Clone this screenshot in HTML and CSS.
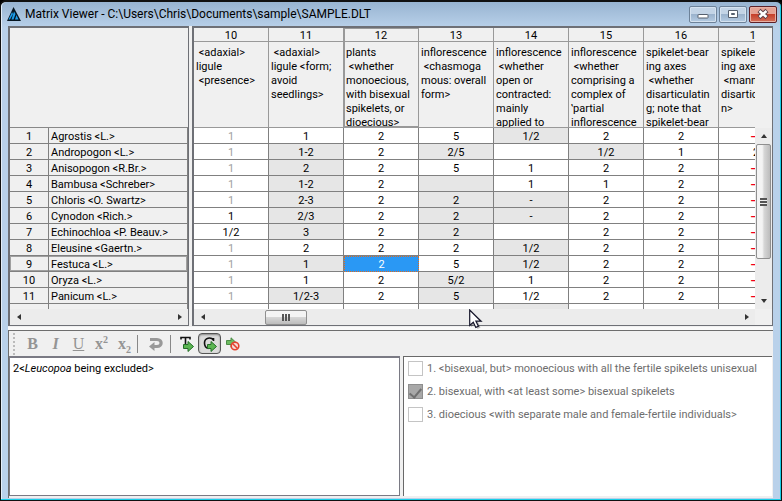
FILE: index.html
```html
<!DOCTYPE html>
<html lang="en">
<head>
<meta charset="utf-8">
<title>Matrix Viewer</title>
<link rel="stylesheet" href="styles.css">
</head>
<body>
<div class="window">
  <header class="titlebar">
    <svg class="logo" width="14" height="14" viewBox="0 0 14 14" aria-hidden="true">
      <path d="M6.500 0L14 14H0z" fill="#061520"/>
      <path d="M5 5L1.500 12.500H3L6 7zM7 4.500L4.500 12.500H6.500L8.500 7zM9.500 8L8 12.500h3.500z" fill="#1d9ce8"/>
    </svg>
    <h1>Matrix Viewer - C:\Users\Chris\Documents\sample\SAMPLE.DLT</h1>
    <div class="caption">
      <button aria-label="Minimize"><svg width="12" height="12" viewBox="0 0 12 12"><rect x="1" y="6.500" width="10" height="3.500" rx=".5" fill="#fff" stroke="#56606e"/></svg></button>
      <button aria-label="Maximize"><svg width="12" height="12" viewBox="0 0 12 12"><path d="M1.500 2.500h9v7h-9z" fill="#fff" stroke="#56606e"/><path d="M4.500 5.500h3v1h-3z" fill="#9ab" stroke="#56606e"/></svg></button>
      <button class="close" aria-label="Close"><svg width="12" height="12" viewBox="0 0 12 12"><path d="M2 2.500L10 9.500M10 2.500L2 9.500" stroke="#5a4048" stroke-width="4.500"/><path d="M2.500 3L9.500 9M9.500 3L2.500 9" stroke="#fff" stroke-width="2.500"/></svg></button>
    </div>
  </header>

  <main class="client">
    <section class="matrix">
      <div class="pane taxa">
        <div class="corner"></div>
        <div class="viewport">
          <table>
            <colgroup><col class="c-num"><col></colgroup>
            <tbody>
              <tr><th>1</th><td>Agrostis &lt;L.&gt;</td></tr>
              <tr><th>2</th><td>Andropogon &lt;L.&gt;</td></tr>
              <tr><th>3</th><td>Anisopogon &lt;R.Br.&gt;</td></tr>
              <tr><th>4</th><td>Bambusa &lt;Schreber&gt;</td></tr>
              <tr><th>5</th><td>Chloris &lt;O. Swartz&gt;</td></tr>
              <tr><th>6</th><td>Cynodon &lt;Rich.&gt;</td></tr>
              <tr><th>7</th><td>Echinochloa &lt;P. Beauv.&gt;</td></tr>
              <tr><th>8</th><td>Eleusine &lt;Gaertn.&gt;</td></tr>
              <tr class="current"><th>9</th><td>Festuca &lt;L.&gt;</td></tr>
              <tr><th>10</th><td>Oryza &lt;L.&gt;</td></tr>
              <tr><th>11</th><td>Panicum &lt;L.&gt;</td></tr>
              <tr><th></th><td></td></tr>
            </tbody>
          </table>
        </div>
        <div class="hbar"><button class="arrow left" aria-label="Scroll left"></button><button class="arrow right" aria-label="Scroll right"></button></div>
      </div>

      <div class="pane data">
        <div class="viewport">
          <table>
            <colgroup><col><col><col><col><col><col><col><col></colgroup>
            <thead>
              <tr class="nums"><th>10</th><th>11</th><th class="sel">12</th><th>13</th><th>14</th><th>15</th><th>16</th><th>17</th></tr>
              <tr class="names">
                <th><div>&nbsp;&lt;adaxial&gt;<br>ligule<br>&nbsp;&lt;presence&gt;</div></th>
                <th><div>&nbsp;&lt;adaxial&gt;<br>ligule &lt;form;<br>avoid<br>seedlings&gt;</div></th>
                <th class="sel"><div>plants<br>&nbsp;&lt;whether<br>monoecious,<br>with bisexual<br>spikelets, or<br>dioecious&gt;</div></th>
                <th><div>inflorescence<br>&nbsp;&lt;chasmoga<br>mous: overall<br>form&gt;</div></th>
                <th><div>inflorescence<br>&nbsp;&lt;whether<br>open or<br>contracted:<br>mainly<br>applied to</div></th>
                <th><div>inflorescence<br>&nbsp;&lt;whether<br>comprising a<br>complex of<br>‛partial<br>inflorescence</div></th>
                <th><div>spikelet-bear<br>ing axes<br>&nbsp;&lt;whether<br>disarticulatin<br>g; note that<br>spikelet-bear</div></th>
                <th><div>spikelet-bear<br>ing axes<br>&nbsp;&lt;manner of<br>disarticulatio<br>n&gt;</div></th>
              </tr>
            </thead>
            <tbody>
              <tr><td class="dim">1</td><td>1</td><td>2</td><td>5</td><td class="g">1/2</td><td>2</td><td>2</td><td class="na">—</td></tr>
              <tr><td class="dim">1</td><td class="g">1-2</td><td>2</td><td class="g">2/5</td><td></td><td class="g">1/2</td><td>1</td><td>2</td></tr>
              <tr><td class="dim">1</td><td class="g">2</td><td>2</td><td>5</td><td>1</td><td>2</td><td>2</td><td class="na">—</td></tr>
              <tr><td class="dim">1</td><td class="g">1-2</td><td>2</td><td class="g"></td><td>1</td><td>1</td><td>2</td><td class="na">—</td></tr>
              <tr><td class="dim">1</td><td class="g">2-3</td><td>2</td><td class="g">2</td><td class="g">-</td><td>2</td><td>2</td><td class="na">—</td></tr>
              <tr><td>1</td><td class="g">2/3</td><td>2</td><td class="g">2</td><td class="g">-</td><td>2</td><td>2</td><td class="na">—</td></tr>
              <tr><td>1/2</td><td class="g">3</td><td>2</td><td class="g">2</td><td></td><td>2</td><td>2</td><td class="na">—</td></tr>
              <tr><td class="dim">1</td><td>2</td><td>2</td><td>2</td><td class="g">1/2</td><td>2</td><td>2</td><td class="na">—</td></tr>
              <tr><td class="dim">1</td><td class="g">1</td><td class="picked">2</td><td>5</td><td class="g">1/2</td><td>2</td><td>2</td><td class="na">—</td></tr>
              <tr><td class="dim">1</td><td>1</td><td>2</td><td class="g">5/2</td><td>1</td><td>2</td><td>2</td><td class="na">—</td></tr>
              <tr><td class="dim">1</td><td class="g">1/2-3</td><td>2</td><td class="g">5</td><td>1/2</td><td>2</td><td>2</td><td class="na">—</td></tr>
              <tr><td></td><td></td><td></td><td></td><td class="g"></td><td></td><td></td><td></td></tr>
            </tbody>
          </table>
        </div>
        <div class="vbar"><button class="arrow up" aria-label="Scroll up"></button><div class="vthumb"><i></i></div><button class="arrow down" aria-label="Scroll down"></button></div>
        <div class="hbar"><button class="arrow left" aria-label="Scroll left"></button><div class="hthumb"><i></i></div><button class="arrow right" aria-label="Scroll right"></button></div>
        <svg class="cursor" width="15" height="21" viewBox="0 0 15 21" aria-hidden="true">
          <path d="M2 2v16l4-3.500 2.500 5.500 3-1.500L9 13h5z" fill="#000" opacity=".25"/>
          <path d="M.7 1v15.500l3.600-3.300 2.500 5.200 2.600-1.200-2.500-5H12z" fill="#fff" stroke="#15152a" stroke-width="1.200"/>
        </svg>
      </div>
    </section>

    <section class="attribute">
      <div class="toolbar" role="toolbar">
        <span class="grip"></span>
        <button class="rt bold" disabled>B</button>
        <button class="rt italic" disabled>I</button>
        <button class="rt under" disabled>U</button>
        <button class="rt bold" disabled>x<sup>2</sup></button>
        <button class="rt bold" disabled>x<sub>2</sub></button>
        <span class="sep"></span>
        <button class="tool undo" disabled aria-label="Undo"><svg width="14" height="14" viewBox="0 0 14 14"><path d="M1 2.500h7c5.500 0 5.500 7 0 7H5" fill="none" stroke="#999" stroke-width="3.200"/><path d="M5.500 5v9L0 9.500z" fill="#999"/></svg></button>
        <span class="sep"></span>
        <button class="tool" aria-label="Next taxon"><svg width="14" height="16" viewBox="0 0 14 16"><path d="M1 3.500V1.500h9v2M5.500 1.500V11M4 11.500h3" fill="none" stroke="#111" stroke-width="1.600"/><path d="M3.500 8.500H8V5.500l5.500 5-5.500 5v-3H3.500z" fill="#5bb552" stroke="#246f28"/></svg></button>
        <button class="tool on" aria-label="Next character"><svg width="16" height="16" viewBox="0 0 16 16"><path d="M11.500 5V2M11.500 4C9 .8 2.500 1.500 2.500 7c0 3 1.500 5 4 5.500" fill="none" stroke="#111" stroke-width="1.600"/><path d="M5.500 8.500H9V5.500l5.500 5-5.500 5v-3H5.500z" fill="#5bb552" stroke="#246f28"/></svg></button>
        <button class="tool" aria-label="Stay on cell"><svg width="14" height="14" viewBox="0 0 14 14"><path d="M.5 3.500H5V.8l5 4.700-5 4.700V7.500H.5z" fill="#6cba60" stroke="#4a8c45"/><circle cx="9" cy="9" r="3.800" fill="#f6dcd8" stroke="#e4432c" stroke-width="1.600"/><path d="M6.500 6.500l5 5" stroke="#e4432c" stroke-width="1.600"/></svg></button>
      </div>
      <div class="editors">
        <div class="text" role="textbox" contenteditable="true" aria-label="Attribute text">2&lt;<em>Leucopoa</em> being excluded&gt;</div>
        <div class="states">
          <label><input type="checkbox" disabled><span>1. &lt;bisexual, but&gt; monoecious with all the fertile spikelets unisexual</span></label>
          <label><input type="checkbox" checked disabled><span>2. bisexual, with &lt;at least some&gt; bisexual spikelets</span></label>
          <label><input type="checkbox" disabled><span>3. dioecious &lt;with separate male and female-fertile individuals&gt;</span></label>
        </div>
      </div>
    </section>
  </main>
</div>
</body>
</html>
```
FILE: styles.css
```css
* { box-sizing: border-box; }

body {
  margin: 0;
  background: #000;
  color: #000;
  font: 11px/14px Roboto, "DejaVu Sans Condensed", sans-serif;
}

button { margin: 0; padding: 0; border: 0; background: none; font: inherit; }
svg { display: block; }

.window {
  display: flex;
  flex-direction: column;
  height: 100vh;
  padding: 0 8px 2px 6px;
  border: 1px solid #111;
  border-top-width: 2px;
  border-radius: 6px 6px 0 0;
  background: linear-gradient(#98b4d1, #b9d1ea 26px);
  box-shadow: inset -1px -1px #18cfe8, inset 1px 0 #e4eef8;
}

/* Title bar */
.titlebar { display: flex; align-items: center; height: 24px; flex: none; margin-right: -4px; }
h1 {
  flex: 1;
  margin: 0 0 0 4px;
  font: 12px/16px Roboto, "Open Sans", sans-serif;
  white-space: nowrap;
}
.caption { display: flex; gap: 2px; }
.caption button {
  display: grid;
  place-items: center;
  width: 28px;
  height: 17px;
  border: 1px solid #6d8299;
  border-radius: 2px;
  background: linear-gradient(#c3d4e6 50%, #9bb3cd 50%, #b4cbe2);
  box-shadow: inset 0 0 0 1px #d5e2ef;
}
.caption .close {
  border-color: #5e2027;
  background: linear-gradient(#e5a294 50%, #c6402b 50%, #d3705a);
  box-shadow: inset 0 0 0 1px #e8b0a4;
}

.client {
  display: flex;
  flex: 1;
  flex-direction: column;
  gap: 4px;
  min-height: 0;
  margin-left: 1px;
  background: #f0f0f0;
}

/* Matrix panes */
.matrix { display: grid; grid-template: 100% / 181px minmax(0, 1fr); gap: 3px; height: 300px; flex: none; }
.pane {
  display: grid;
  min-width: 0;
  border: 2px solid #6e7076;
  border-width: 2px 1px 1px 2px;
}
.taxa { grid-template: 100px minmax(0, 1fr) 16px / minmax(0, 1fr); }
.data {
  position: relative;
  grid-template: 100px minmax(0, 1fr) 16px / minmax(0, 1fr) 17px;
}
.viewport { overflow: hidden; min-width: 0; min-height: 0; background: #fff; }
.data .viewport { grid-area: 1 / 1 / 3 / 2; }
.corner { border-bottom: 1px solid #888; }

table { width: 100%; border-collapse: separate; border-spacing: 0; table-layout: fixed; }
.data table { width: 600px; }
.c-num { width: 39px; }
th, td {
  height: 16px;
  padding: 2px 0 0;
  border: solid #808080;
  border-width: 0 1px 1px 0;
  font-weight: normal;
  line-height: 13px;
  text-align: center;
  white-space: nowrap;
  overflow: hidden;
}
.taxa th, .taxa td { background: #f0f0f0; }
.taxa td { padding-left: 2px; text-align: left; }
.current th { box-shadow: inset 1px 1px #a0a0a0, inset 0 -1px #a0a0a0; }
.current td { box-shadow: inset -1px 1px #a0a0a0, inset 0 -1px #a0a0a0; }
thead th { border-color: #999; background: #f0f0f0; }
.nums th { height: 14px; line-height: 11px; }
.names th { height: 86px; padding: 0; text-align: left; vertical-align: top; }
.names div { height: 85px; padding: 4px 0 0 2px; overflow: hidden; line-height: 14px; }
.nums .sel { box-shadow: inset 1px 1px #999; }
.names .sel { box-shadow: inset 1px -1px #999; }
.dim { color: #a0a0a0; }
.g { background: #e6e6e6; }
.na { color: #f0001c; font-family: "DejaVu Sans", sans-serif; font-weight: bold; }
.picked { padding-top: 1px; border: 1px dotted #e06a1c; background: #2a98f4; color: #fff; }

/* Scroll bars */
.hbar { display: flex; align-items: center; background: #ececec; }
.data .hbar { grid-area: 3 / 1; }
.vbar { grid-area: 2 / 2; display: flex; flex-direction: column; align-items: center; background: #ececec; }
.hbar .right { margin-left: auto; }
.vbar .down { margin-top: auto; }
.arrow { display: grid; place-items: center; width: 17px; height: 16px; flex: none; }
.arrow::before { content: ""; border: 3px solid transparent; }
.left::before { border-right: 4px solid #333; border-left-width: 0; }
.right::before { border-left: 4px solid #333; border-right-width: 0; }
.up::before { border-bottom: 4px solid #333; border-top-width: 0; }
.down::before { border-top: 4px solid #333; border-bottom-width: 0; }
.hthumb, .vthumb { display: grid; place-items: center; flex: none; border: 1px solid #8f8f8f; border-radius: 2px; }
.hthumb { width: 42px; height: 15px; margin-left: 54px; background: linear-gradient(#f4f4f4 45%, #d6d6d6 50%, #bcbcbc); }
.vthumb { width: 15px; height: 115px; background: linear-gradient(90deg, #f4f4f4 40%, #d6d6d6 55%, #bcbcbc); }
.hthumb i { width: 8px; height: 7px; background: repeating-linear-gradient(90deg, #555 0 2px, transparent 2px 3px); }
.vthumb i { width: 7px; height: 8px; background: repeating-linear-gradient(#555 0 2px, #eee 2px 3px); }

.cursor { position: absolute; left: 275px; bottom: -5px; z-index: 2; }

/* Attribute editor */
.attribute {
  display: flex;
  flex: 1;
  flex-direction: column;
  min-height: 0;
  border: solid #6e6e6e;
  border-width: 1px 0 0 1px;
  box-shadow: 0 -3px #fafafa;
}
.toolbar { display: flex; align-items: center; height: 25px; flex: none; padding-left: 4px; }
.grip { width: 2px; height: 22px; margin-right: 6px; background: repeating-linear-gradient(#bbb 0 2px, transparent 2px 4px); }
.rt { width: 23px; height: 22px; color: #949494; font: 16px/22px "Liberation Serif", serif; }
.bold { font-weight: bold; }
.italic { font-style: italic; font-weight: bold; }
.under { text-decoration: underline; }
sup, sub { font-size: 10px; line-height: 0; }
.sep { width: 1px; height: 18px; margin: 0 4px 0 1px; background: #888; }
.tool { display: grid; place-items: center; width: 23px; height: 21px; }
.undo { width: 27px; }
.on { border: 1px solid #555; border-radius: 4px; background: #dcdcdc; box-shadow: inset 0 1px 2px #888; }

.editors { display: grid; grid-template-columns: 391px minmax(0, 1fr); gap: 3px; flex: 1; min-height: 0; padding-right: 1px; }
.text {
  margin-bottom: 2px;
  padding: 4px 3px;
  border: 1px solid #7a7a84;
  border-top-width: 2px;
  background: #fff;
  outline: 0;
}
.states {
  display: flex;
  flex-direction: column;
  gap: 8px;
  margin-bottom: 2px;
  padding: 4px;
  border: solid #696969;
  border-width: 1px 0 0 1px;
  background: #fff;
  color: #6d6d6d;
}
label { display: flex; gap: 4px; height: 15px; align-items: center; white-space: nowrap; }
input {
  display: grid;
  place-items: center;
  width: 15px;
  height: 15px;
  margin: 0;
  flex: none;
  appearance: none;
  border: 1px solid #c4c4c4;
  background: #fff;
}
input:checked { border-color: #8e8e8e; background: #a8a8a8; }
input:checked::before {
  content: "";
  width: 5px;
  height: 10px;
  border: solid #707070;
  border-width: 0 2px 2px 0;
  transform: rotate(40deg);
}
```
